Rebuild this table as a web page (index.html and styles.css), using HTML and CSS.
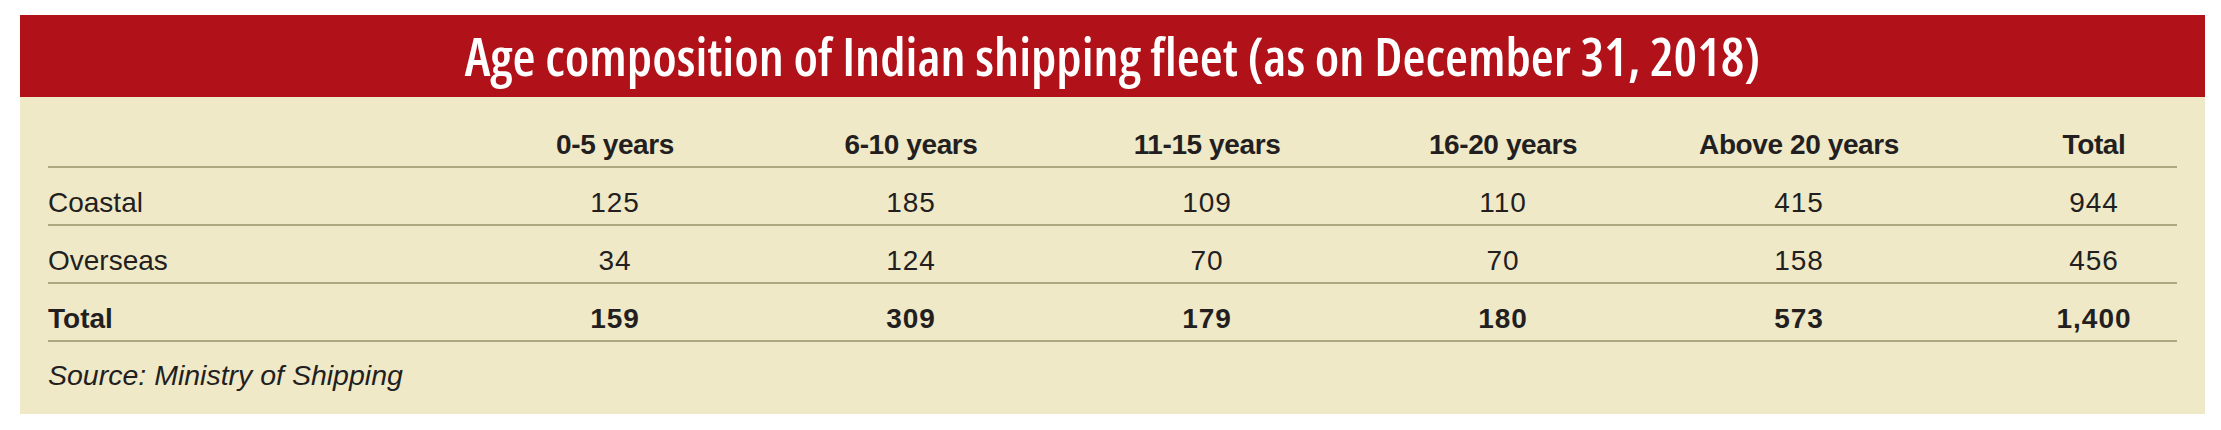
FILE: index.html
```html
<!DOCTYPE html>
<html lang="en">
<head>
<meta charset="utf-8">
<title>Age composition of Indian shipping fleet</title>
<link rel="stylesheet" href="styles.css">
</head>
<body>
<div class="card">
  <div class="title-bar"><h1 class="title">Age composition of Indian shipping fleet (as on December 31, 2018)</h1></div>
  <div class="panel">
    <div class="row head">
      <div class="cell label"></div>
      <div class="cell">0-5 years</div>
      <div class="cell">6-10 years</div>
      <div class="cell">11-15 years</div>
      <div class="cell">16-20 years</div>
      <div class="cell">Above 20 years</div>
      <div class="cell last">Total</div>
    </div>
    <div class="row data">
      <div class="cell label">Coastal</div>
      <div class="cell">125</div>
      <div class="cell">185</div>
      <div class="cell">109</div>
      <div class="cell">110</div>
      <div class="cell">415</div>
      <div class="cell last">944</div>
    </div>
    <div class="row data">
      <div class="cell label">Overseas</div>
      <div class="cell">34</div>
      <div class="cell">124</div>
      <div class="cell">70</div>
      <div class="cell">70</div>
      <div class="cell">158</div>
      <div class="cell last">456</div>
    </div>
    <div class="row data total">
      <div class="cell label">Total</div>
      <div class="cell">159</div>
      <div class="cell">309</div>
      <div class="cell">179</div>
      <div class="cell">180</div>
      <div class="cell">573</div>
      <div class="cell last">1,400</div>
    </div>
    <p class="source">Source: Ministry of Shipping</p>
  </div>
</div>
</body>
</html>
```

FILE: styles.css
```css
html, body {
  margin: 0;
  padding: 0;
  background: #ffffff;
}

.card {
  width: 2185px;
  margin: 15px 0 0 20px;
}

.title-bar {
  background: #b11118;
  height: 82px;
  display: flex;
  justify-content: center;
  align-items: center;
}

.title {
  margin: 0;
  color: #ffffff;
  font-family: "Open Sans", "DejaVu Sans Condensed", sans-serif;
  font-stretch: 75%;
  font-weight: 600;
  font-size: 52.8px;
  line-height: 82px;
  white-space: nowrap;
}

.panel {
  background: #efe9c8;
  height: 317px;
  box-sizing: border-box;
  padding: 13px 28px 0 28px;
  font-family: "Liberation Sans", Arial, sans-serif;
  color: #231f20;
}

.row {
  display: grid;
  grid-template-columns: 419px repeat(5, 296px) 230px;
  width: 2129px;
  height: 58px;
  box-sizing: border-box;
  border-bottom: 2px solid #aca87f;
  padding-bottom: 5px;
  align-items: end;
  font-size: 28px;
  line-height: 32px;
}

.cell {
  text-align: center;
  white-space: nowrap;
}

.cell.label {
  text-align: left;
}

.cell.last {
  padding-left: 64px;
}

.data .cell:not(.label) {
  letter-spacing: 1px;
}

.head,
.total {
  font-weight: 700;
}

.head .cell {
  letter-spacing: -0.4px;
}

.source {
  margin: 17px 0 0 0;
  font-family: "Liberation Sans", Arial, sans-serif;
  font-style: italic;
  font-size: 28.5px;
  line-height: 32px;
}
```
